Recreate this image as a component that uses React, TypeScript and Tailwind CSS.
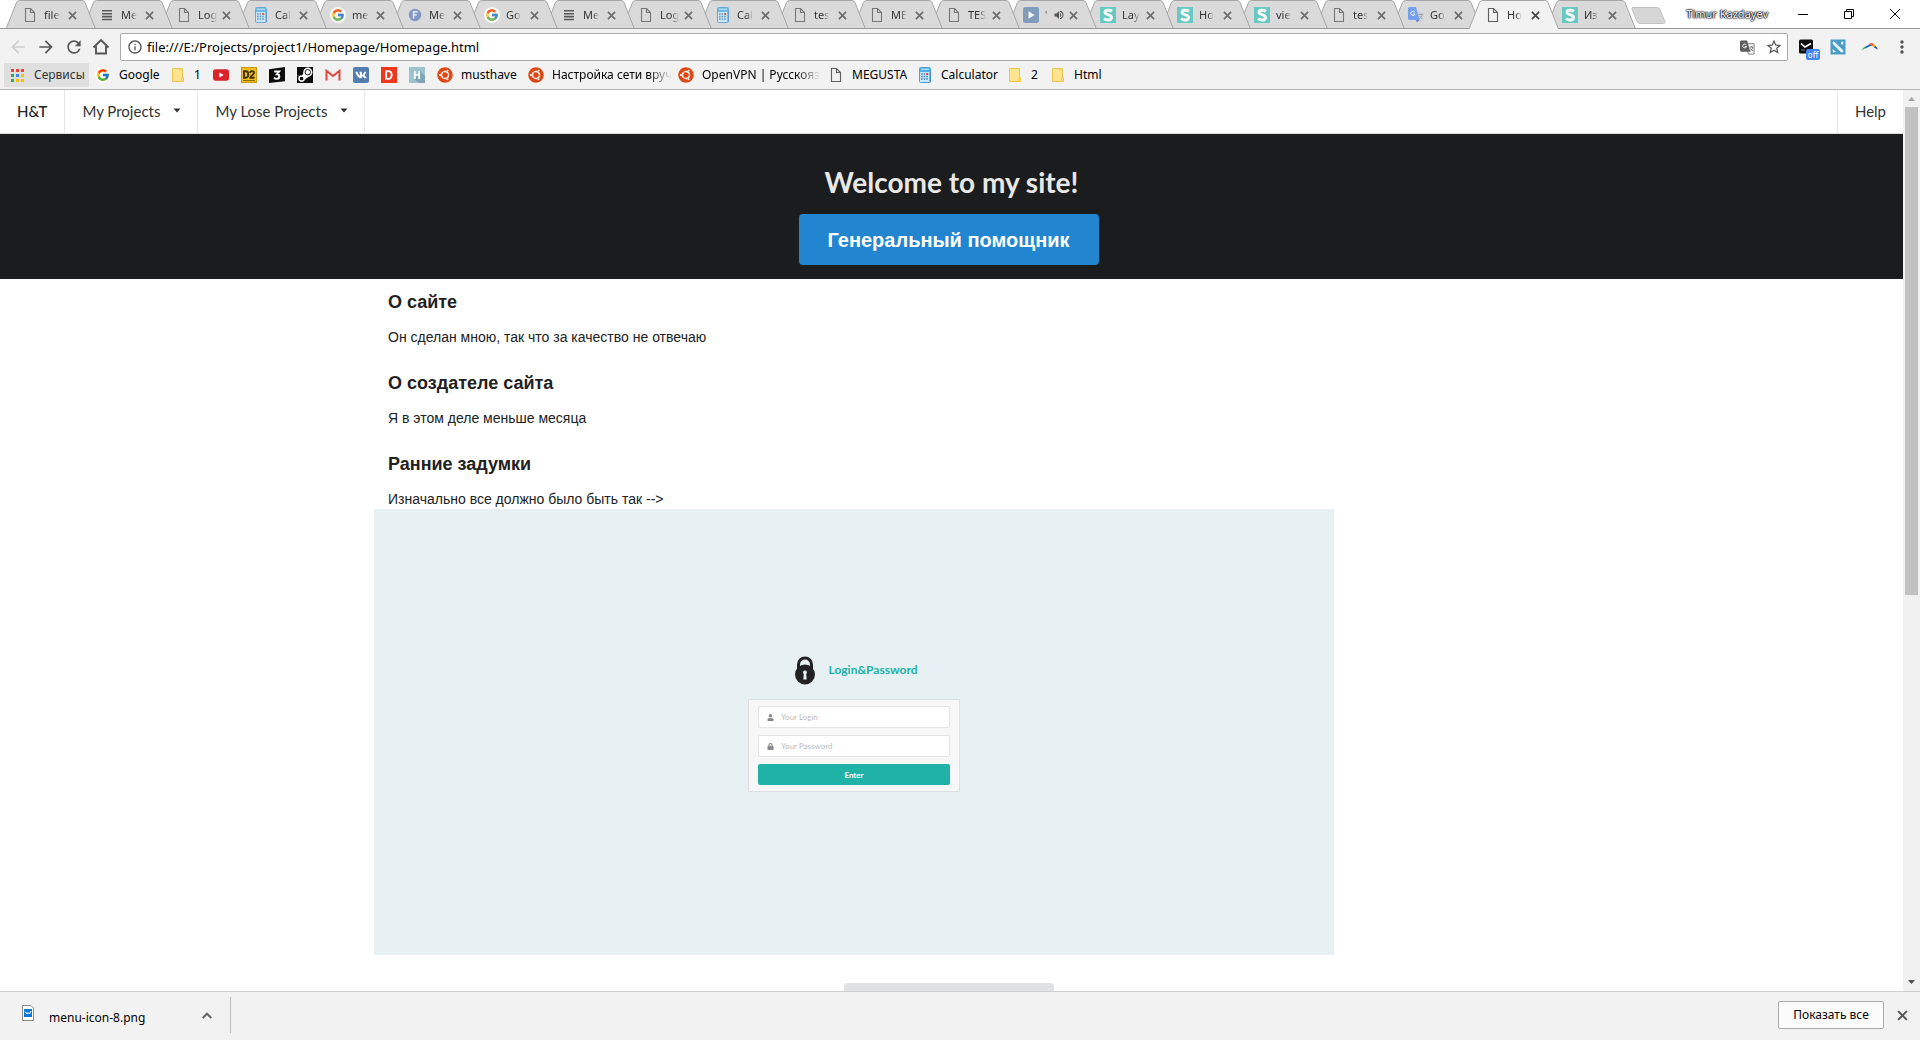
import React from "react";
import { FcGoogle } from "react-icons/fc";
import { FaUbuntu, FaVk, FaUser, FaLock } from "react-icons/fa";
import {
  MdArrowBack,
  MdArrowForward,
  MdRefresh,
  MdInfoOutline,
  MdStarBorder,
  MdMoreVert,
  MdVolumeUp,
} from "react-icons/md";

type IconName =
  | "doc"
  | "menu"
  | "calc"
  | "google"
  | "f"
  | "play"
  | "s"
  | "translate"
  | "folder"
  | "youtube"
  | "d2"
  | "three"
  | "steam"
  | "gmail"
  | "vk"
  | "d"
  | "h"
  | "ubuntu";

function Icon({ name }: { name: IconName }) {
  switch (name) {
    case "doc":
      return (
        <svg viewBox="0 0 16 16" className="size-4 shrink-0" fill="none" stroke="#5f5f5f" strokeWidth="1.1">
          <path d="M3.500 1.500h5l4 4v9h-9z" />
          <path d="M8.500 1.500v4h4" />
        </svg>
      );
    case "menu":
      return (
        <svg viewBox="0 0 16 16" className="size-4 shrink-0" fill="#3a3a3a">
          <path d="M3 3h10v1.6H3zM3 5.9h10v1.6H3zM3 8.8h10v1.6H3zM3 11.7h10v1.6H3z" />
        </svg>
      );
    case "calc":
      return (
        <svg viewBox="0 0 16 16" className="size-4 shrink-0">
          <rect x="2.5" y=".5" width="11" height="15" rx="1" fill="#c9e9fa" stroke="#4b9fd5" />
          <rect x="3" y="1" width="10" height="4" fill="#4fb0e8" />
          <path d="M4 2.2h8" stroke="#cdeeff" />
          <path d="M4 7h1.6M6.6 7h1.6M4 9.5h1.6M6.6 9.5h1.6M9.2 9.5h1.6M4 12h1.6M6.6 12h1.6M9.2 12h1.6" stroke="#4586bd" strokeWidth="1.4" />
          <path d="M9.2 7h2" stroke="#e8452c" strokeWidth="2" />
          <path d="M13 5v10" stroke="#2f7fd0" />
        </svg>
      );
    case "google":
      return (
        <span className="flex size-4 shrink-0 items-center justify-center rounded-full bg-white">
          <FcGoogle size={14} />
        </span>
      );
    case "f":
      return (
        <svg viewBox="0 0 16 16" className="size-4 shrink-0">
          <circle cx="8" cy="8" r="6.2" fill="#6e87c2" />
          <path d="M6.6 11.5V4.8h4M6.6 8h3.2" fill="none" stroke="#e3e8f6" strokeWidth="1.7" />
        </svg>
      );
    case "play":
      return (
        <svg viewBox="0 0 16 16" className="size-4 shrink-0">
          <rect width="16" height="16" rx="2" fill="#6d8fb5" />
          <path d="M5.5 4.2v7.6L11.5 8z" fill="#fff" />
        </svg>
      );
    case "s":
      return (
        <svg viewBox="0 0 16 16" className="size-4 shrink-0">
          <rect width="16" height="16" fill="#4ac7be" />
          <path
            d="M12 4.300C9.800 2.700 5 2.500 5 5.300 5 8.300 11.500 7 11.500 10.500 11.500 13.700 6.500 13.700 4 11.700"
            fill="none"
            stroke="#fff"
            strokeWidth="3"
          />
        </svg>
      );
    case "translate":
      return (
        <svg viewBox="0 0 16 16" className="size-4 shrink-0">
          <path d="M6 4h9.500v11.300H9z" fill="#d2d4d8" />
          <path d="M0 1.500A1.500 1.500 0 0 1 1.500 0H8l3.600 13H1.500A1.500 1.500 0 0 1 0 11.500z" fill="#5c92f5" />
          <path d="M8 13h3.600L9 15.600z" fill="#4f66c4" />
          <path d="M6.800 5.200A2.100 2.100 0 1 0 7 7H5" fill="none" stroke="#fff" strokeWidth="1" />
          <path d="M10.500 7.500H15M12.700 6.500v1M14.200 7.500c-.4 2-1.500 3.400-3 4M11.500 9c.8 1.400 1.700 2 3 2.500" fill="none" stroke="#8b9096" strokeWidth=".9" />
        </svg>
      );
    case "folder":
      return (
        <svg viewBox="0 0 16 16" className="size-4 shrink-0">
          <path d="M2.500 1.500h10v9h1v4h-11z" fill="#ffe48f" stroke="#ecc44e" />
          <path d="M11.500 14.500v-3.500h2v3.500z" fill="#ffe48f" stroke="#ecc44e" strokeWidth=".8" />
        </svg>
      );
    case "youtube":
      return (
        <svg viewBox="0 0 16 16" className="size-4 shrink-0">
          <rect y="2.300" width="16" height="11.400" rx="2.600" fill="#d9252a" />
          <path d="M6.300 5.500v5L10.700 8z" fill="#fff" />
        </svg>
      );
    case "d2":
      return (
        <svg viewBox="0 0 16 16" className="size-4 shrink-0">
          <rect width="16" height="16" fill="#c99a14" />
          <rect x="1" y="1" width="14" height="14" fill="#f2bd1d" />
          <path d="M3 4.200h1.800c3.300 0 3.300 6.600 0 6.600H3zM9 5.800c.2-2.200 4-2.200 4 0C13 7.600 9.500 9 9.300 10.700h4.200" fill="none" stroke="#3b3013" strokeWidth="1.900" />
          <path d="M2 13.500h12" stroke="#8b6a10" />
        </svg>
      );
    case "three":
      return (
        <svg viewBox="0 0 16 16" className="size-4 shrink-0">
          <path d="M0 2.200 16 0v14.200L0 16z" fill="#0b0b0b" />
          <path d="M5.200 4.500h5L7.900 7.200c3.200 0 3.200 4.600 0 4.600-1.400 0-2.300-.5-2.900-1.200" fill="none" stroke="#fff" strokeWidth="1.900" />
        </svg>
      );
    case "steam":
      return (
        <svg viewBox="0 0 16 16" className="size-4 shrink-0">
          <rect width="16" height="16" fill="#0c0c0c" />
          <path d="M0 8 4 10l3-4.500L12 9.500 6.500 13.500z" fill="#fff" />
          <circle cx="10.800" cy="5.200" r="4.600" fill="#fff" />
          <circle cx="10.800" cy="5.200" r="2.700" fill="#fff" stroke="#0c0c0c" strokeWidth=".9" />
          <circle cx="4.600" cy="11.500" r="2.600" fill="#0c0c0c" stroke="#fff" strokeWidth="1.500" />
        </svg>
      );
    case "gmail":
      return (
        <svg viewBox="0 0 16 16" className="size-4 shrink-0">
          <path d="M1.500 3h13v10.500h-13z" fill="#f3eeee" />
          <path d="M1.500 13.500V3.800L8 9l6.500-5.200v9.700" fill="none" stroke="#d6483c" strokeWidth="2" />
        </svg>
      );
    case "vk":
      return (
        <span className="flex size-4 shrink-0 items-center justify-center rounded-xs bg-[#527daf] text-white">
          <FaVk size={12} />
        </span>
      );
    case "d":
      return (
        <svg viewBox="0 0 16 16" className="size-4 shrink-0">
          <rect width="16" height="16" fill="#f0371c" />
          <path d="M5.200 4.100h2.100c4.500 0 4.500 7.800 0 7.800H5.200z" fill="none" stroke="#fff" strokeWidth="1.900" />
        </svg>
      );
    case "h":
      return (
        <svg viewBox="0 0 16 16" className="size-4 shrink-0">
          <rect width="16" height="16" fill="#9cc3cf" />
          <path d="m11 4 5 5v7h-6l-5-4z" fill="#7fa5b2" />
          <path d="M5.800 4v8M10.200 4v8M5.800 8h4.400" fill="none" stroke="#fff" strokeWidth="1.700" />
        </svg>
      );
    case "ubuntu":
      return (
        <span className="flex size-4 shrink-0 items-center justify-center rounded-full bg-white text-[#dd4814]">
          <FaUbuntu size={16} />
        </span>
      );
  }
}

type TabInfo = { icon: IconName; label: string; active?: boolean; audio?: boolean };

const tabs: TabInfo[] = [
  { icon: "doc", label: "file" },
  { icon: "menu", label: "Me" },
  { icon: "doc", label: "Log" },
  { icon: "calc", label: "Cal" },
  { icon: "google", label: "me" },
  { icon: "f", label: "Me" },
  { icon: "google", label: "Go" },
  { icon: "menu", label: "Me" },
  { icon: "doc", label: "Log" },
  { icon: "calc", label: "Cal" },
  { icon: "doc", label: "tes" },
  { icon: "doc", label: "ME" },
  { icon: "doc", label: "TES" },
  { icon: "play", label: "'", audio: true },
  { icon: "s", label: "Lay" },
  { icon: "s", label: "Ho" },
  { icon: "s", label: "vie" },
  { icon: "doc", label: "tes" },
  { icon: "translate", label: "Go" },
  { icon: "doc", label: "Ho", active: true },
  { icon: "s", label: "Из" },
];

function Cross({ className }: { className: string }) {
  return (
    <svg viewBox="0 0 10 10" className={className} fill="none" stroke="currentColor" strokeWidth="1.800">
      <path d="M1 1l8 8M9 1L1 9" />
    </svg>
  );
}

function Tab({ tab, order }: { tab: TabInfo; order: number }) {
  return (
    <div role="tab" aria-selected={!!tab.active} className="relative h-[29px] w-[77px] shrink-0" style={{ zIndex: tab.active ? 40 : order }}>
      <svg viewBox="0 0 90 29" className="absolute top-0 left-0 h-[29px] w-[90px]">
        <path
          d="M0 29 10.500 2.500Q11.500.5 13.500.5H76Q78 .5 79 2.500L89.500 29"
          fill={tab.active ? "#f2f2f2" : "#dadada"}
          stroke="#a6a6a6"
        />
        {!tab.active && <path d="M0 28.500h90" stroke="#999" />}
      </svg>
      <div className="relative flex h-[30px] w-[71px] items-center pl-4">
        <span className={tab.active ? "" : "opacity-80"}>
          <Icon name={tab.icon} />
        </span>
        <span className="ml-1.5 mask-r-from-60% text-[11px] whitespace-nowrap text-[#333]">{tab.label}</span>
        {tab.audio && <MdVolumeUp size={12} className="ml-1.5 text-[#555]" />}
        <button aria-label="Close tab" className={tab.active ? "ml-auto text-[#444]" : "ml-auto text-[#6b6b6b]"}>
          <Cross className="size-[9px]" />
        </button>
      </div>
    </div>
  );
}

function TabStrip() {
  return (
    <header className="flex h-[29px] shrink-0 border-b border-[#999] bg-white pl-1.5">
      <div role="tablist" className="flex">
        {tabs.map((tab, i) => (
          <Tab key={i} tab={tab} order={30 - i} />
        ))}
      </div>
      <button aria-label="New tab" className="mt-[7px] ml-2 h-[17px]">
        <svg viewBox="0 0 36 17" className="h-[17px] w-9">
          <path d="M1 2Q.5.500 2 .5H26Q28 .5 28.800 2.500L34 14.500Q34.500 16.500 32.500 16.500H8.500Q7 16.500 6 14.500z" fill="#d6d6d6" stroke="#c2c2c2" />
        </svg>
      </button>
      <div className="ml-auto flex h-7 items-center pr-0.5 text-black">
        <button className="mr-3 text-[11px] text-white [text-shadow:0_0_1px_#000,0_0_1px_#000,0_0_2px_#000,0_0_2px_#000]">Timur Kazdayev</button>
        <button aria-label="Minimize" className="flex w-[46px] justify-center">
          <svg viewBox="0 0 10 10" className="size-2.5" stroke="#000"><path d="M0 5.500h10" /></svg>
        </button>
        <button aria-label="Restore" className="flex w-[46px] justify-center">
          <svg viewBox="0 0 10 10" className="size-2.5" fill="none" stroke="#000"><path d="M.5 2.500h7v7h-7zM2.500 2.500v-2h7v7h-2" /></svg>
        </button>
        <button aria-label="Close window" className="flex w-[46px] justify-center">
          <svg viewBox="0 0 10 10" className="size-2.5" stroke="#000"><path d="M0 0l10 10M10 0L0 10" /></svg>
        </button>
      </div>
    </header>
  );
}

function Toolbar() {
  return (
    <div className="flex h-8 shrink-0 items-center pt-1 pr-2 pl-2">
      <button aria-label="Back" className="mr-2 text-[#cfcfcf]"><MdArrowBack size={20} /></button>
      <button aria-label="Forward" className="mr-2 text-[#555]"><MdArrowForward size={20} /></button>
      <button aria-label="Reload" className="mr-2 text-[#555]"><MdRefresh size={20} /></button>
      <button aria-label="Home" className="mr-2.5 text-[#555]">
        <svg viewBox="0 0 18 18" className="size-[18px]" fill="none" stroke="currentColor" strokeWidth="1.900">
          <path d="M1.500 9.500 9 2l7.500 7.500M4 8v7.500h10V8" />
        </svg>
      </button>
      <div className="flex h-7 flex-1 items-center rounded-xs border border-[#a9a9a9] bg-white pr-1 pl-1.5">
        <MdInfoOutline size={16} className="text-[#555]" />
        <input
          aria-label="Address"
          defaultValue="file:///E:/Projects/project1/Homepage/Homepage.html"
          className="ml-1 min-w-0 flex-1 pt-0.5 text-[13px] text-black outline-none"
        />
        <button aria-label="Translate" className="mr-2.5 text-[#666]">
          <svg viewBox="0 0 16 16" className="size-[15px]">
            <path d="M6 4h9v11H9z" fill="#fff" stroke="#777" />
            <path d="M0 2a1.500 1.500 0 0 1 1.500-1.500H7.500L11 12.500H1.500A1.500 1.500 0 0 1 0 11z" fill="#5c5c5c" />
            <path d="M6.800 5.200A2.100 2.100 0 1 0 7 7H5" fill="none" stroke="#fff" />
            <path d="M10 7.500h4M12.200 6.500v1M13.700 7.500c-.4 2-1.500 3.400-2.500 4M11 9c.8 1.400 1.700 2 3 2.500" fill="none" stroke="#666" />
          </svg>
        </button>
        <button aria-label="Bookmark this page" className="text-[#555]"><MdStarBorder size={18} /></button>
      </div>
      <button aria-label="Mail extension" className="relative ml-2.5">
        <svg viewBox="0 0 16 16" className="size-4">
          <rect x="1" y=".5" width="14" height="14" rx="1.500" fill="#101010" />
          <path d="M3 4.500 7 8l6-3.500" fill="none" stroke="#fff" strokeWidth="1.600" />
          <path d="M3 11h4" stroke="#777" />
        </svg>
        <span className="absolute top-2.5 left-2 h-[11px] w-3.5 rounded-xs bg-[#4285f4] text-center text-[8px] leading-[11px] text-white">off</span>
      </button>
      <button aria-label="Game extension" className="ml-4">
        <svg viewBox="0 0 16 16" className="size-4">
          <rect x=".5" y=".5" width="15" height="15" fill="#4a9cc8" />
          <path d="M2.500 3 4 2.500l9.500 9-.5 2-2-.3-8-8zM11 3l2.500-.5L13 6l-2-1zM2.500 10 6 12.800l-3 .7z" fill="#e8f4fa" />
        </svg>
      </button>
      <button aria-label="Rainbow extension" className="ml-4">
        <svg viewBox="0 0 16 16" className="size-4">
          <path d="M0 11.500C.6 9.400 2.200 7.900 4.500 7.300L4 9.300C2.500 9.600 1.200 10.300 0 11.500z" fill="#34a35a" />
          <path d="M3.500 7.700 8.500 4.500 9.500 6.500 4 9.300z" fill="#1e6fc0" />
          <path d="M7.500 4.800C8.700 3.900 10.200 3.800 11.500 4.600L10.800 7.200 8.800 6.400z" fill="#f05a3c" />
          <path d="M11.300 4.500C12.400 5.200 13.200 6.200 13.800 7.400L12 8.500 10.500 7z" fill="#f7b02c" />
          <path d="M13.400 6.900C14.600 7.800 15.500 9 16 10.800 14.700 9.800 13.400 9 11.800 8.400z" fill="#1d4f9c" />
        </svg>
      </button>
      <button aria-label="Browser menu" className="ml-3.5 text-[#555]"><MdMoreVert size={20} /></button>
    </div>
  );
}

const bookmarks: { icon: IconName; label?: string; box: string; fade?: boolean }[] = [
  { icon: "google", label: "Google", box: "w-[75px]" },
  { icon: "folder", label: "1", box: "w-[43px]" },
  { icon: "youtube", box: "w-7" },
  { icon: "d2", box: "w-7" },
  { icon: "three", box: "w-7" },
  { icon: "steam", box: "w-7" },
  { icon: "gmail", box: "w-7" },
  { icon: "vk", box: "w-7" },
  { icon: "d", box: "w-7" },
  { icon: "h", box: "w-7" },
  { icon: "ubuntu", label: "musthave", box: "w-[91px]" },
  { icon: "ubuntu", label: "Настройка сети вруч", box: "w-[150px]", fade: true },
  { icon: "ubuntu", label: "OpenVPN | Русскояз", box: "w-[150px]", fade: true },
  { icon: "doc", label: "MEGUSTA", box: "w-[89px]" },
  { icon: "calc", label: "Calculator", box: "w-[90px]" },
  { icon: "folder", label: "2", box: "w-[43px]" },
  { icon: "folder", label: "Html", box: "w-16" },
];

const appColors = ["#ea4335", "#ea4335", "#ea4335", "#34a853", "#4285f4", "#fbbc05", "#34a853", "#fbbc05", "#fbbc05"];

function BookmarksBar() {
  return (
    <nav aria-label="Bookmarks" className="flex h-[29px] shrink-0 items-center border-b border-[#b3b3b3] pl-1 text-xs text-black">
      <a href="#apps" className="mr-1.5 flex h-6 w-[85px] items-center gap-2.5 bg-[#dfdfdf] pl-[7px] text-[#333]">
        <svg viewBox="0 0 13 13" className="size-[13px] shrink-0">
          {appColors.map((c, i) => (
            <rect key={i} x={(i % 3) * 5} y={Math.floor(i / 3) * 5} width="3" height="3" fill={c} />
          ))}
        </svg>
        Сервисы
      </a>
      {bookmarks.map((b, i) => (
        <a key={i} href="#bookmark" aria-label={b.label ?? b.icon} className={`flex shrink-0 items-center ${b.box}`}>
          <Icon name={b.icon} />
          {b.label && <span className={b.fade ? "ml-2 mask-r-from-80% whitespace-nowrap" : "ml-2 whitespace-nowrap"}>{b.label}</span>}
        </a>
      ))}
    </nav>
  );
}

function Caret() {
  return (
    <svg viewBox="0 0 8 5" className="ml-[13px] h-[5px] w-2" fill="#333">
      <path d="M.5.500h7L4 4.500z" />
    </svg>
  );
}

function SiteMenu() {
  return (
    <nav aria-label="Site" className="flex h-11 border-b border-[#dcdcdd] bg-white font-[Lato] text-[15px] leading-5 text-[#333]">
      <a href="#home" className="flex items-center border-r border-[#e8e8e9] px-[17px] pb-0.5 font-medium text-[#222]">H&amp;T</a>
      <button className="flex items-center border-r border-[#e8e8e9] pr-4 pb-0.5 pl-[17px]">My Projects<Caret /></button>
      <button className="flex items-center border-r border-[#e8e8e9] pr-4 pb-0.5 pl-[17px]">My Lose Projects<Caret /></button>
      <a href="#help" className="ml-auto flex items-center border-l border-[#e8e8e9] px-[17px] pb-0.5">Help</a>
    </nav>
  );
}

const sections = [
  ["О сайте", "Он сделан мною, так что за качество не отвечаю"],
  ["О создателе сайта", "Я в этом деле меньше месяца"],
  ["Ранние задумки", "Изначально все должно было быть так -->"],
];

function LoginMockup() {
  return (
    <div className="mr-auto flex h-[446px] w-[960px] flex-col items-center bg-[#e7f0f3] pt-[145px] font-[Lato]">
      <div className="flex h-8 items-center gap-3 pl-1">
        <svg viewBox="0 0 22 29" className="h-[29px] w-[22px]">
          <path d="M4.500 14V8.500a6.500 6.500 0 0 1 13 0V14" fill="none" stroke="#222" strokeWidth="3" />
          <circle cx="11" cy="18.500" r="10" fill="#222" />
          <path d="M11 14.500a2 2 0 0 1 1.200 3.600l.5 5.400H9.300l.5-5.400A2 2 0 0 1 11 14.500z" fill="#e7f0f3" />
        </svg>
        <h4 className="text-xs font-bold text-[#21b0a6]">Login&amp;Password</h4>
      </div>
      <form className="mt-[13px] flex w-[212px] flex-col gap-[7px] border border-[#dcdfe1] bg-[#f7f7f7] px-[9px] py-1.5" onSubmit={(e) => e.preventDefault()}>
        <label className="flex h-[22px] items-center rounded-xs border border-[#e4e5e6] bg-white pl-2 text-[#888]">
          <FaUser size={7} />
          <input aria-label="Login" placeholder="Your Login" className="ml-[7px] w-36 text-[8px] outline-none placeholder:text-[#bbb]" />
        </label>
        <label className="flex h-[22px] items-center rounded-xs border border-[#e4e5e6] bg-white pl-2 text-[#888]">
          <FaLock size={7} />
          <input aria-label="Password" type="password" placeholder="Your Password" className="ml-[7px] w-36 text-[8px] outline-none placeholder:text-[#bbb]" />
        </label>
        <button className="h-[21px] rounded-xs bg-[#20b1a7] text-[8px] font-bold text-white">Enter</button>
      </form>
    </div>
  );
}

function Page() {
  return (
    <main className="min-w-0 flex-1 overflow-hidden bg-white">
      <SiteMenu />
      <section className="flex h-[145px] flex-col items-center bg-[#1b1c1d] pt-[30px]">
        <h1 className="font-[Lato] text-[28px] leading-9 font-bold text-[#e8e8e8]">Welcome to my site!</h1>
        <button className="mt-3.5 mr-1.5 h-[51px] w-[300px] rounded-sm bg-[#2185d0] font-[Liberation_Sans] text-xl font-bold text-white">
          Генеральный помощник
        </button>
      </section>
      <div className="flex flex-col pl-[374px] font-[Liberation_Sans] text-[#212121]">
        {sections.map(([title, body], i) => (
          <section key={title} className={i === 0 ? "mt-[11px] pl-3.5" : "mt-6 pl-3.5"}>
            <h3 className="text-lg leading-6 font-bold">{title}</h3>
            <p className="mt-[13px] text-sm leading-5">{body}</p>
          </section>
        ))}
        <LoginMockup />
      </div>
      <div className="flex justify-center pt-7 pr-1.5">
        <button aria-label="More" className="h-10 w-[210px] rounded-sm bg-[#e0e1e2]" />
      </div>
    </main>
  );
}

function Scrollbar() {
  return (
    <div className="flex w-[17px] flex-col items-center bg-[#f1f1f1]">
      <svg viewBox="0 0 17 17" className="size-[17px]"><path d="M5 11h7L8.500 7z" fill="#a3a3a3" /></svg>
      <div className="h-[488px] w-[13px] bg-[#c1c1c1]" />
      <svg viewBox="0 0 17 17" className="mt-auto size-[17px]"><path d="M5 6h7L8.500 10z" fill="#505050" /></svg>
    </div>
  );
}

function DownloadShelf() {
  return (
    <footer className="flex h-[49px] shrink-0 items-center border-t border-[#cfcfcf] pr-3 pb-0.5">
      <button className="flex h-9 w-[231px] items-center border-r border-[#bdbdbd] pr-[18px] pl-5">
        <svg viewBox="0 0 16 16" className="mb-1 size-4">
          <path d="M2.500.500h8.500l2.500 2.500v12.500h-11z" fill="#fff" stroke="#8a8a8a" />
          <rect x="4" y="4" width="8" height="8" fill="#0b78d7" />
          <path d="M5 6.500 7 9l1-1.500L9.500 9l1.500-3" fill="none" stroke="#fff" />
        </svg>
        <span className="mt-1.5 ml-[13px] text-xs text-black">menu-icon-8.png</span>
        <svg viewBox="0 0 10 7" className="ml-auto h-[7px] w-2.5" fill="none" stroke="#666" strokeWidth="2"><path d="M.7 6 5 1.700 9.300 6" /></svg>
      </button>
      <button className="ml-auto h-7 w-[106px] rounded-xs border border-[#ababab] bg-[#fbfbfb] text-xs text-black">Показать все</button>
      <button aria-label="Close downloads" className="ml-[13px] text-[#555]"><Cross className="size-[11px]" /></button>
    </footer>
  );
}

export default function App() {
  return (
    <div className="flex h-screen flex-col overflow-hidden bg-[#f2f2f2] font-[Noto_Sans,sans-serif]">
      <TabStrip />
      <Toolbar />
      <BookmarksBar />
      <div className="flex min-h-0 flex-1">
        <Page />
        <Scrollbar />
      </div>
      <DownloadShelf />
    </div>
  );
}
